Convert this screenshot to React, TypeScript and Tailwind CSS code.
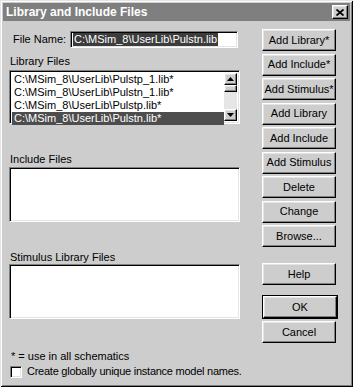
const raised =
  "border border-t-white border-l-white border-r-black border-b-black shadow-[inset_-1px_-1px_0_#808080,inset_1px_1px_0_#e4e4e4] bg-[#cdcdcd]";
const sunken =
  "border border-t-[#808080] border-l-[#808080] border-r-white border-b-white shadow-[inset_1px_1px_0_#000,inset_-1px_-1px_0_#e4e4e4] bg-white";

const libraryFiles = [
  "C:\\MSim_8\\UserLib\\Pulstp_1.lib*",
  "C:\\MSim_8\\UserLib\\Pulstn_1.lib*",
  "C:\\MSim_8\\UserLib\\Pulstp.lib*",
  "C:\\MSim_8\\UserLib\\Pulstn.lib*",
];

const topButtons = [
  "Add Library*",
  "Add Include*",
  "Add Stimulus*",
  "Add Library",
  "Add Include",
  "Add Stimulus",
  "Delete",
  "Change",
  "Browse...",
];

function Btn({ label, className = "" }: { label: string; className?: string }) {
  return (
    <div className={`${raised} flex h-[22px] w-[74px] items-center justify-center whitespace-nowrap ${className}`}>
      {label}
    </div>
  );
}

function Arrow({ up }: { up?: boolean }) {
  return (
    <div className={`${raised} flex h-[12px] w-[13px] items-center justify-center`}>
      <svg width="7" height="4" viewBox="0 0 7 4">
        {up ? <polygon points="3.5,0 7,4 0,4" fill="#000" /> : <polygon points="0,0 7,0 3.5,4" fill="#000" />}
      </svg>
    </div>
  );
}

export default function App() {
  return (
    <div className="h-[387px] w-[353px] bg-[#cdcdcd] p-[3px] font-['Liberation_Sans',Arial,sans-serif] text-[11px] leading-[13px] text-black shadow-[inset_1px_1px_0_#e4e4e4,inset_-1px_-1px_0_#000,inset_2px_2px_0_#fff,inset_-2px_-2px_0_#808080]">
      <div className="flex h-[18px] items-center justify-between bg-[#7f7f7f] pl-[3px] pr-[2px]">
        <span className="text-[12px] font-bold text-white">Library and Include Files</span>
        <div className={`${raised} flex h-[14px] w-[16px] items-center justify-center`}>
          <svg width="8" height="7" viewBox="0 0 8 7">
            <path d="M0.5 0.5 L7.5 6.5 M7.5 0.5 L0.5 6.5" stroke="#000" strokeWidth="1.8" />
          </svg>
        </div>
      </div>

      <div className="flex pl-[6px]">
        <div className="flex w-[231px] flex-col">
          <div className="mt-[10px] flex items-center">
            <span className="w-[61px] pl-[4px]">File Name:</span>
            <div className={`${sunken} flex h-[17px] w-[168px] items-center pl-[2px]`}>
              <span className="bg-[#3c3c3c] px-[1px] text-white">C:\MSim_8\UserLib\Pulstn.lib</span>
            </div>
          </div>

          <div className="mt-[7px] pl-[1px]">Library Files</div>
          <div className={`${sunken} mt-[2px] flex h-[54px] p-[2px]`}>
            <div className="flex flex-1 flex-col">
              {libraryFiles.map((f, i) => (
                <div
                  key={f}
                  className={`h-[13px] pl-[2px] ${i === 3 ? "bg-[#4d4d4d] text-white" : ""}`}
                >
                  {f}
                </div>
              ))}
            </div>
            <div className="flex w-[13px] flex-col bg-[#e6e6e6]">
              <Arrow up />
              <div className={`${raised} h-[7px] w-[13px]`} />
              <div className="flex-1" />
              <Arrow />
            </div>
          </div>

          <div className="mt-[29px] pl-[1px]">Include Files</div>
          <div className={`${sunken} mt-[1px] h-[55px]`} />

          <div className="mt-[29px] pl-[1px]">Stimulus Library Files</div>
          <div className={`${sunken} mt-0 h-[55px]`} />

          <div className="mt-[31px] pl-[2px]">* = use in all schematics</div>
          <div className="mt-[2px] flex items-center gap-[5px] pl-[1px]">
            <div className={`${sunken} h-[12px] w-[12px] shrink-0`} />
            <span className="whitespace-nowrap tracking-[-0.25px]">Create globally unique instance model names.</span>
          </div>
        </div>

        <div className="ml-[22px] flex flex-col">
          <div className="mt-[8px] flex flex-col gap-[2.5px]">
            {topButtons.map((b) => (
              <Btn key={b} label={b} />
            ))}
          </div>
          <Btn label="Help" className="mt-[16px]" />
          <div className="mt-[10px] border border-black">
            <Btn label="OK" className="h-[21px] w-[72px]" />
          </div>
          <Btn label="Cancel" className="mt-[2px]" />
        </div>
      </div>
    </div>
  );
}
